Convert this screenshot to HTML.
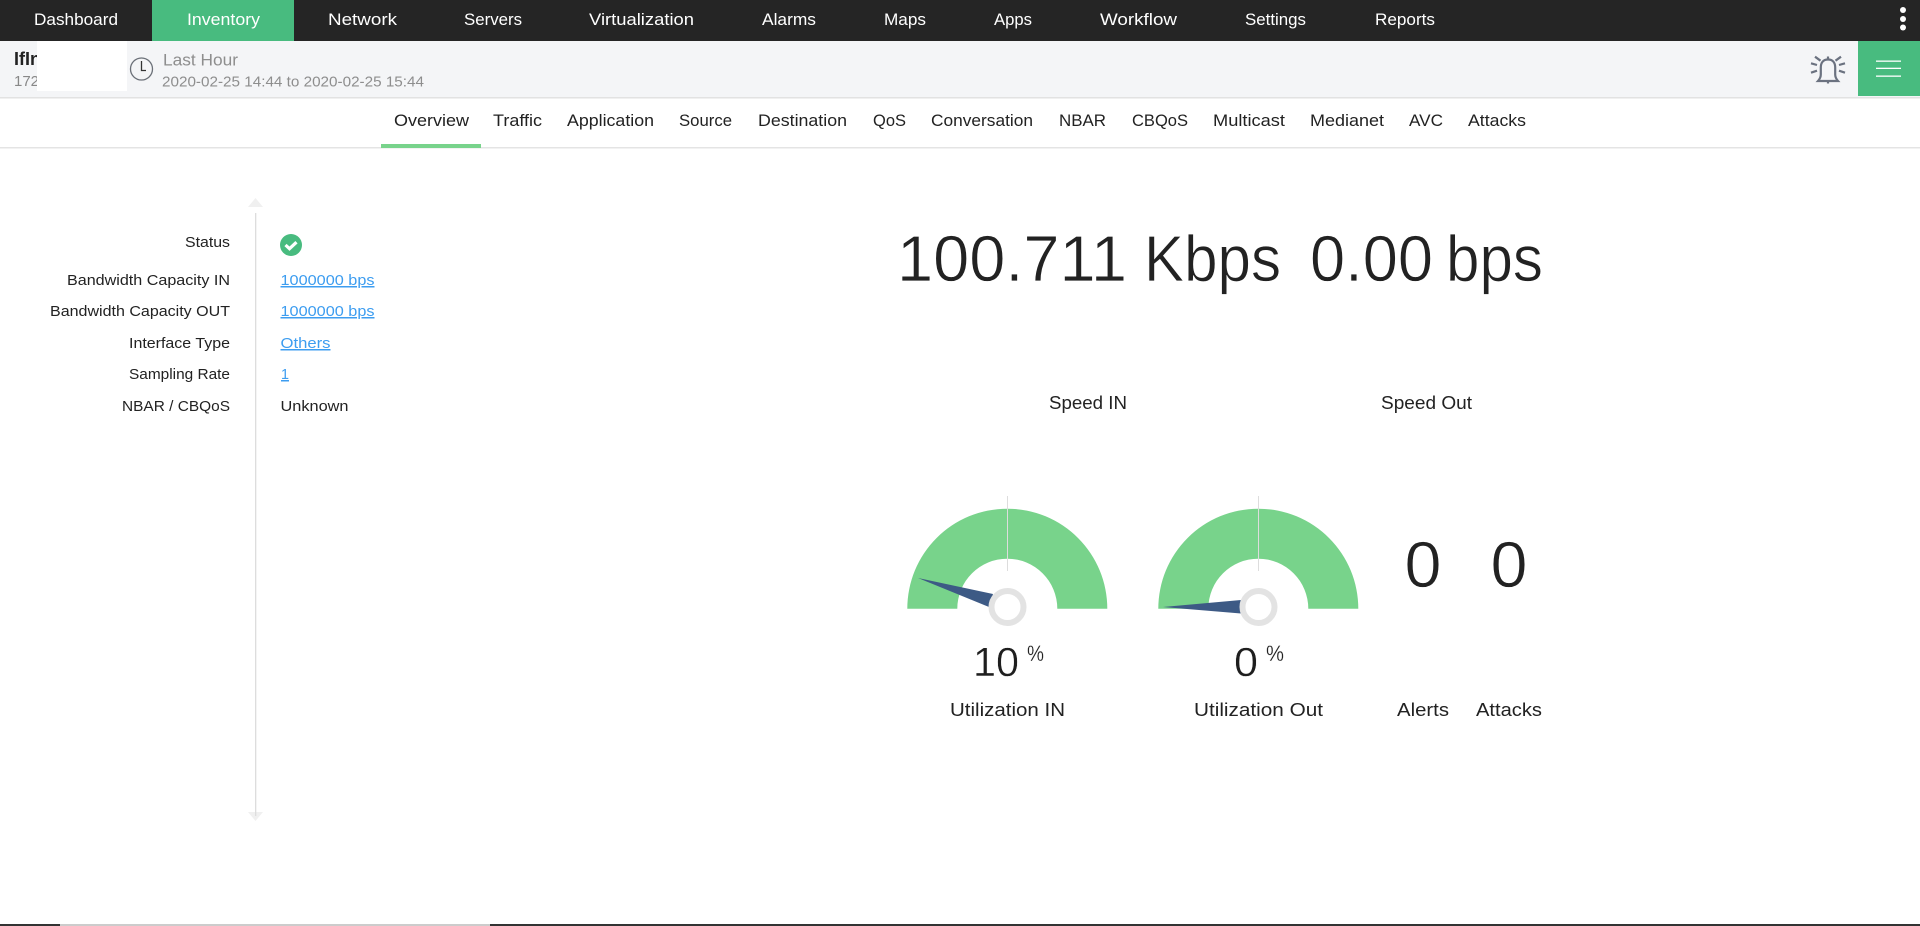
<!DOCTYPE html>
<html lang="en"><head><meta charset="utf-8"><title>Inventory Overview</title>
<style>
html,body{margin:0;padding:0;width:1920px;height:926px;overflow:hidden;background:#fff}
svg{display:block;position:absolute;left:0;top:0}
text{font-family:"Liberation Sans",sans-serif;white-space:pre}
.n text{font-size:17px;fill:#fff}
.t text{font-size:17px;fill:#222}
.l text{font-size:15px;fill:#222}
.v text{font-size:15px;fill:#3d9df0;text-decoration:underline}
.m text{font-size:18px;fill:#222}
.b text{font-size:65px;fill:#222;stroke:#fff;stroke-width:.7px}
.g text{font-size:41px;fill:#1e1e1e;stroke:#fff;stroke-width:.4px}
.p text{font-size:22px;fill:#222;stroke:#fff;stroke-width:.2px}
</style></head><body>
<svg width="1920" height="926" viewBox="0 0 1920 926" xmlns="http://www.w3.org/2000/svg">
<rect width="1920" height="926" fill="#fff"/>
<!-- top nav -->
<rect width="1920" height="41" fill="#252525"/>
<rect x="152" width="142" height="41" fill="#48bb7f"/>
<g class="n">
<text x="34" y="25" textLength="84" lengthAdjust="spacingAndGlyphs">Dashboard</text>
<text x="187" y="25" textLength="73" lengthAdjust="spacingAndGlyphs">Inventory</text>
<text x="328" y="25" textLength="69" lengthAdjust="spacingAndGlyphs">Network</text>
<text x="464" y="25" textLength="58" lengthAdjust="spacingAndGlyphs">Servers</text>
<text x="589" y="25" textLength="105" lengthAdjust="spacingAndGlyphs">Virtualization</text>
<text x="762" y="25" textLength="54" lengthAdjust="spacingAndGlyphs">Alarms</text>
<text x="884" y="25" textLength="42" lengthAdjust="spacingAndGlyphs">Maps</text>
<text x="994" y="25" textLength="38" lengthAdjust="spacingAndGlyphs">Apps</text>
<text x="1100" y="25" textLength="77" lengthAdjust="spacingAndGlyphs">Workflow</text>
<text x="1245" y="25" textLength="61" lengthAdjust="spacingAndGlyphs">Settings</text>
<text x="1375" y="25" textLength="60" lengthAdjust="spacingAndGlyphs">Reports</text>
</g>
<circle cx="1903" cy="10" r="3" fill="#fff"/><circle cx="1903" cy="19" r="3" fill="#fff"/><circle cx="1903" cy="27.500" r="3" fill="#fff"/>
<!-- sub header -->
<rect y="41" width="1920" height="56" fill="#f4f5f7"/>
<rect y="97" width="1920" height="1.500" fill="#e2e2e2"/>
<text x="14" y="65" font-size="18" font-weight="700" fill="#222">IfIn</text>
<text x="14" y="86" font-size="15" fill="#888">172</text>
<rect x="37" y="41" width="90" height="50" fill="#fff"/>
<circle cx="141.500" cy="69" r="11" fill="none" stroke="#6b7078" stroke-width="1.300"/>
<path d="M141.500 61V70.500H146" fill="none" stroke="#333" stroke-width="1.300"/>
<text x="163" y="65.500" font-size="17" fill="#8e8e8e" textLength="75" lengthAdjust="spacingAndGlyphs">Last Hour</text>
<text x="162" y="86.500" font-size="15" fill="#8e8e8e" textLength="262" lengthAdjust="spacingAndGlyphs">2020-02-25 14:44 to 2020-02-25 15:44</text>
<!-- bell -->
<g fill="none" stroke="#6b7280" stroke-width="2.200">
<path d="M1828 59.500c-5 0-7.200 3.500-7.200 8v7c0 2.500-1 4.500-2.800 6.500h20c-1.800-2-2.800-4-2.800-6.500v-7c0-4.500-2.200-8-7.200-8z"/>
<path d="M1828 56.500v3M1828 81v2.500"/>
<path d="M1815 56.700l5.500 4M1841 56.700l-5.500 4M1811 63.300l6 1.700M1845 63.300l-6 1.700M1811 72.700l6-2M1845 72.700l-6-2"/>
</g>
<!-- menu -->
<rect x="1858" y="41" width="62" height="55" fill="#48bb7f"/>
<rect x="1876" y="60.500" width="25" height="1.300" fill="#fff"/><rect x="1876" y="67.700" width="25" height="1.300" fill="#fff"/><rect x="1876" y="75.500" width="25" height="1.300" fill="#fff"/>
<!-- tabs -->
<rect y="147" width="1920" height="1.500" fill="#e4e4e4"/>
<rect x="381" y="144" width="100" height="4" fill="#78d38b"/>
<g class="t">
<text x="394" y="126" textLength="75" lengthAdjust="spacingAndGlyphs">Overview</text>
<text x="493" y="126" textLength="49" lengthAdjust="spacingAndGlyphs">Traffic</text>
<text x="567" y="126" textLength="87" lengthAdjust="spacingAndGlyphs">Application</text>
<text x="679" y="126" textLength="53" lengthAdjust="spacingAndGlyphs">Source</text>
<text x="758" y="126" textLength="89" lengthAdjust="spacingAndGlyphs">Destination</text>
<text x="873" y="126" textLength="33" lengthAdjust="spacingAndGlyphs">QoS</text>
<text x="931" y="126" textLength="102" lengthAdjust="spacingAndGlyphs">Conversation</text>
<text x="1059" y="126" textLength="47" lengthAdjust="spacingAndGlyphs">NBAR</text>
<text x="1132" y="126" textLength="56" lengthAdjust="spacingAndGlyphs">CBQoS</text>
<text x="1213" y="126" textLength="72" lengthAdjust="spacingAndGlyphs">Multicast</text>
<text x="1310" y="126" textLength="74" lengthAdjust="spacingAndGlyphs">Medianet</text>
<text x="1409" y="126" textLength="34" lengthAdjust="spacingAndGlyphs">AVC</text>
<text x="1468" y="126" textLength="58" lengthAdjust="spacingAndGlyphs">Attacks</text>
</g>
<!-- left panel -->
<path d="M248 207h15l-7.500-9z" fill="#f0f0f0"/>
<path d="M248 812h15l-7.500 9z" fill="#f0f0f0"/>
<rect x="255" y="213" width="1.300" height="603" fill="#ddd"/>
<g class="l">
<text x="185" y="247" textLength="45" lengthAdjust="spacingAndGlyphs">Status</text>
<text x="67" y="285" textLength="163" lengthAdjust="spacingAndGlyphs">Bandwidth Capacity IN</text>
<text x="50" y="316" textLength="180" lengthAdjust="spacingAndGlyphs">Bandwidth Capacity OUT</text>
<text x="129" y="348" textLength="101" lengthAdjust="spacingAndGlyphs">Interface Type</text>
<text x="129" y="379" textLength="101" lengthAdjust="spacingAndGlyphs">Sampling Rate</text>
<text x="122" y="411" textLength="108" lengthAdjust="spacingAndGlyphs">NBAR / CBQoS</text>
<text x="280.500" y="411" textLength="68" lengthAdjust="spacingAndGlyphs">Unknown</text>
</g>
<circle cx="291" cy="245" r="11" fill="#48bb7f"/>
<path d="M285.500 245l4 3.700 7-6.500" fill="none" stroke="#fff" stroke-width="3.200"/>
<g class="v">
<text x="280.500" y="285" textLength="94" lengthAdjust="spacingAndGlyphs">1000000 bps</text>
<text x="280.500" y="316" textLength="94" lengthAdjust="spacingAndGlyphs">1000000 bps</text>
<text x="280.500" y="348" textLength="50" lengthAdjust="spacingAndGlyphs">Others</text>
<text x="281" y="379" textLength="8" lengthAdjust="spacingAndGlyphs">1</text>
</g>
<!-- headline -->
<g class="b">
<text x="897" y="281" textLength="230" lengthAdjust="spacingAndGlyphs">100.711</text>
<text x="1144" y="281" textLength="137" lengthAdjust="spacingAndGlyphs">Kbps</text>
<text x="1310" y="281" textLength="123" lengthAdjust="spacingAndGlyphs">0.00</text>
<text x="1446" y="281" textLength="97" lengthAdjust="spacingAndGlyphs">bps</text>
</g>
<g class="m">
<text x="1049" y="409" textLength="78" lengthAdjust="spacingAndGlyphs">Speed IN</text>
<text x="1381" y="409" textLength="91" lengthAdjust="spacingAndGlyphs">Speed Out</text>
<text x="950" y="716" textLength="115" lengthAdjust="spacingAndGlyphs">Utilization IN</text>
<text x="1194" y="716" textLength="129" lengthAdjust="spacingAndGlyphs">Utilization Out</text>
<text x="1397" y="716" textLength="52" lengthAdjust="spacingAndGlyphs">Alerts</text>
<text x="1476" y="716" textLength="66" lengthAdjust="spacingAndGlyphs">Attacks</text>
</g>
<!-- gauge in -->
<path d="M907.300 608.700a100 100 0 0 1 200 0h-50a50 50 0 0 0-100 0z" fill="#78d38b"/>
<rect x="1007" y="496" width="1" height="75" fill="#ddd"/>
<path d="M918 578L993 594L989 607z" fill="#3d5a85"/>
<circle cx="1007.500" cy="607" r="16" fill="#fff" stroke="#e3e3e3" stroke-width="6"/>
<!-- gauge out -->
<path d="M1158.300 608.700a100 100 0 0 1 200 0h-50a50 50 0 0 0-100 0z" fill="#78d38b"/>
<rect x="1258" y="496" width="1" height="75" fill="#ddd"/>
<path d="M1163 607L1241 600L1241 613.500z" fill="#3d5a85"/>
<circle cx="1258.500" cy="607" r="16" fill="#fff" stroke="#e3e3e3" stroke-width="6"/>
<g class="g">
<text x="973" y="676" textLength="46" lengthAdjust="spacingAndGlyphs">10</text>
<text x="1234" y="676" textLength="24" lengthAdjust="spacingAndGlyphs">0</text>
</g>
<g class="p">
<text x="1027" y="661" textLength="17" lengthAdjust="spacingAndGlyphs">%</text>
<text x="1266" y="661" textLength="18" lengthAdjust="spacingAndGlyphs">%</text>
</g>
<g class="b">
<text x="1404.500" y="587" textLength="37" lengthAdjust="spacingAndGlyphs">0</text>
<text x="1490.500" y="587" textLength="37" lengthAdjust="spacingAndGlyphs">0</text>
</g>
<!-- bottom bar -->
<rect y="924" width="1920" height="2" fill="#333"/>
<rect x="60" y="924" width="430" height="2" fill="#ccc"/>
</svg>
</body></html>
